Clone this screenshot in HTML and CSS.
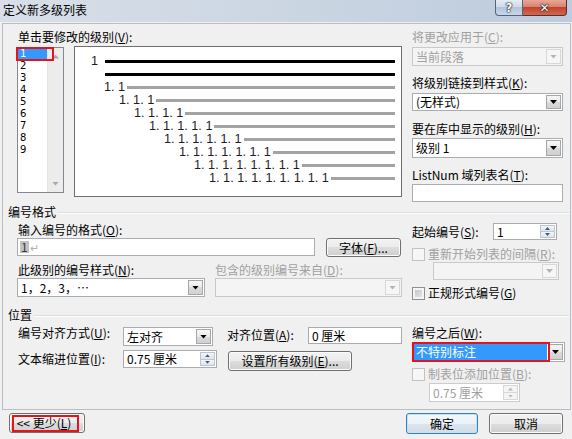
FILE: index.html
```html
<!DOCTYPE html>
<html lang="zh-CN">
<head>
<meta charset="utf-8">
<title>定义新多级列表</title>
<link rel="stylesheet" href="styles.css">
</head>
<body>
<div class="win">
  <div class="titlebar">
    <span class="title">定义新多级列表</span>
    <div class="caps"><span class="cap help">?</span><span class="cap close">✕</span></div>
  </div>
  <div class="frame">
    <div class="top">
      <div class="topleft">
        <div class="lbl ind mt6">单击要修改的级别(<u>V</u>):</div>
        <div class="levelrow">
          <div class="levels">
            <div class="items">
              <div class="item sel">1</div>
              <div class="item">2</div>
              <div class="item">3</div>
              <div class="item">4</div>
              <div class="item">5</div>
              <div class="item">6</div>
              <div class="item">7</div>
              <div class="item">8</div>
              <div class="item">9</div>
            </div>
            <div class="vscroll"><span class="sarr up"></span><span class="sarr down"></span></div>
            <span class="mark mark-level"></span>
          </div>
          <div class="preview">
            <div class="prow p0"><span class="num">1</span><span class="bar black first"></span></div>
            <div class="prow pc"><span class="bar black"></span></div>
            <div class="prow l1"><span class="num">1. 1</span><span class="bar"></span></div>
            <div class="prow l2"><span class="num">1. 1. 1</span><span class="bar"></span></div>
            <div class="prow l3"><span class="num">1. 1. 1. 1</span><span class="bar"></span></div>
            <div class="prow l4"><span class="num">1. 1. 1. 1. 1</span><span class="bar"></span></div>
            <div class="prow l5"><span class="num">1. 1. 1. 1. 1. 1</span><span class="bar"></span></div>
            <div class="prow l6"><span class="num">1. 1. 1. 1. 1. 1. 1</span><span class="bar"></span></div>
            <div class="prow l7"><span class="num">1. 1. 1. 1. 1. 1. 1. 1</span><span class="bar"></span></div>
            <div class="prow l8"><span class="num">1. 1. 1. 1. 1. 1. 1. 1. 1</span><span class="bar"></span></div>
          </div>
        </div>
      </div>
      <div class="rightcol">
        <div class="lbl dis mt6">将更改应用于(<u>C</u>):</div>
        <div class="combo dis mt3 h19"><span class="ctext">当前段落</span><span class="arr"></span></div>
        <div class="lbl mt10">将级别链接到样式(<u>K</u>):</div>
        <div class="combo mt3 h18"><span class="ctext">(无样式)</span><span class="arr"></span></div>
        <div class="lbl mt11">要在库中显示的级别(<u>H</u>):</div>
        <div class="combo mt2 h20"><span class="ctext">级别 1</span><span class="arr"></span></div>
        <div class="lbl mt10">ListNum 域列表名(<u>T</u>):</div>
        <div class="input mt2 h18"></div>
      </div>
    </div>

    <div class="group mt3"><span>编号格式</span></div>
    <div class="sec">
      <div class="secleft">
        <div class="lbl ind mt4">输入编号的格式(<u>O</u>):</div>
        <div class="row mt1">
          <div class="input fmtinput"><span class="ctext"><span class="hl">1</span><span class="ret">↵</span></span></div>
          <div class="btn fontbtn">字体(<u>F</u>)...</div>
        </div>
        <div class="row mt6">
          <div class="lbl ind w198">此级别的编号样式(<u>N</u>):</div>
          <div class="lbl dis">包含的级别编号来自(<u>D</u>):</div>
        </div>
        <div class="row mt1">
          <div class="combo numstyle"><span class="ctext">1，2，3，⋯</span><span class="arr"></span></div>
          <div class="combo dis incl"><span class="ctext"></span><span class="arr"></span></div>
        </div>
      </div>
      <div class="secright">
        <div class="row startrow mt4">
          <span class="lbl">起始编号(<u>S</u>):</span>
          <div class="input startnum"><span class="ctext">1</span><span class="spinbtns"><i class="su"></i><i class="sd"></i></span></div>
        </div>
        <div class="chkrow dis mt7"><span class="chk"></span><span class="lbl">重新开始列表的间隔(<u>R</u>):</span></div>
        <div class="combo dis restart mt1"><span class="ctext"></span><span class="arr"></span></div>
        <div class="chkrow mt6"><span class="chk"></span><span class="lbl">正规形式编号(<u>G</u>)</span></div>
      </div>
    </div>

    <div class="group mt8"><span>位置</span></div>
    <div class="sec">
      <div class="secleft">
        <div class="row mt5">
          <span class="lbl plbl up1">编号对齐方式(<u>U</u>):</span>
          <div class="combo alignc"><span class="ctext">左对齐</span><span class="arr"></span></div>
          <span class="lbl alignlbl">对齐位置(<u>A</u>):</span>
          <div class="input alignpos"><span class="ctext">0 厘米</span></div>
        </div>
        <div class="row mt4">
          <span class="lbl plbl dn2">文本缩进位置(<u>I</u>):</span>
          <div class="input indent"><span class="ctext">0.75 厘米</span><span class="spinbtns"><i class="su"></i><i class="sd"></i></span></div>
          <div class="btn allbtn">设置所有级别(<u>E</u>)...</div>
        </div>
      </div>
      <div class="secright">
        <div class="lbl mt4">编号之后(<u>W</u>):</div>
        <div class="combo after mt2"><span class="ctext selbar">不特别标注</span><span class="arr"></span><span class="mark mark-after"></span></div>
        <div class="chkrow dis mt5"><span class="chk"></span><span class="lbl">制表位添加位置(<u>B</u>):</span></div>
        <div class="input dis tabpos mt2"><span class="ctext">0.75 厘米</span><span class="spinbtns"><i class="su"></i><i class="sd"></i></span></div>
      </div>
    </div>
  </div>

  <div class="bottom">
    <div class="btn lessbtn">&lt;&lt; 更少(<u>L</u>)<span class="mark mark-less"></span></div>
    <div class="btn def okbtn">确定</div>
    <div class="btn cancelbtn">取消</div>
  </div>
</div>
</body>
</html>
```

FILE: styles.css
```css
* { box-sizing: border-box; }
html, body { margin: 0; padding: 0; }
body {
  width: 572px;
  height: 439px;
  overflow: hidden;
  background: #f0f0f0;
  font: 12px/14px "Noto Sans CJK SC", "Noto Sans CJK JP", sans-serif;
  color: #000;
}
u { text-decoration: underline; text-underline-offset: 1px; }

.win { width: 572px; height: 439px; display: flex; flex-direction: column; }

/* title bar */
.titlebar {
  height: 22px;
  flex: none;
  display: flex;
  align-items: flex-start;
  background: linear-gradient(to right, #d8dfe8 0%, #cad5e2 55%, #bccbdd 100%);
}
.title { padding-left: 3px; line-height: 20px; height: 20px; }
.caps { margin-left: auto; margin-right: 5px; display: flex; }
.cap {
  height: 16px;
  display: flex;
  align-items: center;
  justify-content: center;
  color: #fff;
  font: bold 12px/1 "DejaVu Sans", sans-serif;
  text-shadow: 0 0 2px #1d2a3e, 0 0 1px #000, 0 0 1px #000;
}
.help {
  width: 28px;
  border: 1px solid #56637a;
  border-top: none;
  border-radius: 0 0 0 4px;
  background: linear-gradient(#e6edf5, #d0dbe8 45%, #b4c4d9 50%, #c8d6e8);
}
.close {
  width: 44px;
  border: 1px solid #5a2f2a;
  border-left: none;
  border-top: none;
  border-radius: 0 0 4px 0;
  background: linear-gradient(#e7a797, #d8846f 45%, #c4432d 50%, #d2684f);
}

/* frame */
.frame {
  margin: 1px 0 0 2px;
  width: 569px;
  height: 387px;
  flex: none;
  border: 1px solid #b9bec3;
}

.lbl { height: 14px; line-height: 14px; white-space: nowrap; }
.ind { padding-left: 1px; }
.dis, .dis .lbl { color: #a0a0a0; }

.mt1 { margin-top: 1px; }
.mt2 { margin-top: 2px; }
.mt3 { margin-top: 3px; }
.mt4 { margin-top: 4px; }
.mt5 { margin-top: 5px; }
.mt6 { margin-top: 6px; }
.mt7 { margin-top: 7px; }
.mt8 { margin-top: 8px; }
.mt10 { margin-top: 10px; }
.mt11 { margin-top: 11px; }
.h18 { height: 18px; }
.h19 { height: 19px; }
.h20 { height: 20px; }

.top { display: flex; padding-left: 14px; }
.topleft { width: 385px; }
.rightcol { width: 151px; margin-left: 10px; display: flex; flex-direction: column; }

.levelrow { display: flex; align-items: flex-start; gap: 10px; margin-top: 2px; }

/* level list */
.levels {
  position: relative;
  width: 47px;
  height: 146px;
  margin-top: 1px;
  display: flex;
  background: #fff;
  border: 1px solid #828790;
}
.items { flex: 1; }
.item {
  height: 12px;
  line-height: 12px;
  padding-left: 2px;
  font: 10px/12px "DejaVu Sans", sans-serif;
}
.item.sel { background: #3399ff; color: #fff; }
.vscroll {
  width: 16px;
  background: #ececec;
  border-left: 1px solid #e4e4e4;
  display: flex;
  flex-direction: column;
  justify-content: space-between;
}
.sarr { height: 17px; display: flex; align-items: center; justify-content: center; }
.sarr::after { content: ""; width: 7px; height: 4px; background: #a8a8a8; }
.sarr.up::after { clip-path: polygon(50% 0, 100% 100%, 0 100%); }
.sarr.down::after { clip-path: polygon(0 0, 100% 0, 50% 100%); }

.mark { position: absolute; border: 2px solid #e3141c; pointer-events: none; }
.mark-level { left: -2px; top: -1px; width: 38px; height: 14px; }

/* preview */
.preview {
  width: 328px;
  height: 151px;
  background: #fff;
  border: 1px solid #6f6f6f;
  padding: 8px 6px 0 0;
}
.prow { height: 13px; display: flex; align-items: center; }
.num {
  font: 12.7px/13px "Liberation Sans", Arial, sans-serif;
  white-space: pre;
  color: #1e1e1e;
}
.bar { flex: 1; height: 3px; background: #a3a3a3; margin-left: 2px; }
.bar.black { background: #000; }
.bar.first { margin-left: 7px; }
.p0 { padding-left: 16px; }
.pc { padding-left: 28px; }
.l1 { padding-left: 29px; }
.l2 { padding-left: 44px; }
.l3 { padding-left: 59px; }
.l4 { padding-left: 74px; }
.l5 { padding-left: 89px; }
.l6 { padding-left: 104px; }
.l7 { padding-left: 119px; }
.l8 { padding-left: 134px; }

/* controls */
.combo, .input {
  position: relative;
  display: flex;
  align-items: stretch;
  background: #fff;
  border: 1px solid #a9adb3;
}
.ctext {
  flex: 1;
  min-width: 0;
  padding-left: 3px;
  display: flex;
  align-items: center;
  white-space: nowrap;
  overflow: hidden;
}
.arr {
  width: 15px;
  margin: 1px;
  border: 1px solid #a7a6aa;
  background: linear-gradient(#f7f7f7, #e9e9e9 50%, #dadada 50%, #d0d0d0);
  display: flex;
  align-items: center;
  justify-content: center;
}
.arr::after {
  content: "";
  width: 7px;
  height: 4px;
  background: #000;
  clip-path: polygon(0 0, 100% 0, 50% 100%);
}
.combo.dis { background: #f4f4f4; border-color: #c9c9c9; }
.combo.dis .arr { border-color: #d8d8d8; background: #f6f6f6; }
.combo.dis .arr::after { background: #b4b4b4; }

.spinbtns { width: 15px; margin: 1px; display: flex; flex-direction: column; }
.spinbtns i {
  flex: 1;
  display: flex;
  align-items: center;
  justify-content: center;
  background: linear-gradient(#f4f6f9, #dfe5ec);
  border: 1px solid #bcc5d0;
}
.spinbtns i + i { border-top: none; }
.spinbtns i::after { content: ""; width: 5px; height: 3px; background: #42597d; }
.spinbtns .su::after { clip-path: polygon(50% 0, 100% 100%, 0 100%); }
.spinbtns .sd::after { clip-path: polygon(0 0, 100% 0, 50% 100%); }
.input.dis { border-color: #c9ccd0; color: #a0a0a0; }
.input.dis .spinbtns i { background: #f4f4f4; border-color: #d8d8d8; }
.input.dis .spinbtns i::after { background: #b8b8b8; }

.btn {
  position: relative;
  display: flex;
  align-items: center;
  justify-content: center;
  white-space: nowrap;
  border: 1px solid #707070;
  border-radius: 3px;
  background: linear-gradient(#f2f2f2, #ebebeb 50%, #dddddd 50%, #cfcfcf);
  box-shadow: inset 0 0 0 1px #fbfbfb;
}
.btn.def {
  border-color: #3c7fb1;
  box-shadow: inset 0 0 0 1px #bfe4f8;
  background: linear-gradient(#f4f8fb, #eaf1f7 50%, #dbe5ee 50%, #d2dde8);
}

.chkrow { display: flex; align-items: center; gap: 3px; height: 14px; }
.chk {
  width: 13px;
  height: 13px;
  flex: none;
  border: 1px solid #8e8f8f;
  background: linear-gradient(135deg, #b9bdc3, #eeeeef);
  box-shadow: inset 0 0 0 2px #f4f4f4;
}
.chkrow.dis .chk { border-color: #c2c2c2; background: #f7f7f7; box-shadow: none; }

/* groups */
.group {
  display: flex;
  align-items: center;
  height: 14px;
  padding-left: 5px;
  margin-right: 1px;
}
.group::after {
  content: "";
  flex: 1;
  height: 0;
  margin-left: 2px;
  border-top: 1px solid #d5dfe5;
  box-shadow: 0 1px 0 #fff;
}

.sec { display: flex; padding-left: 14px; }
.secleft { width: 385px; }
.secright { width: 151px; margin-left: 10px; display: flex; flex-direction: column; }
.row { display: flex; align-items: flex-start; }

.fmtinput { width: 298px; height: 18px; }
.fmtinput .ctext { padding-left: 2px; }
.hl { background: #c2c2c2; color: #3a3a3a; padding: 0 1px; line-height: 12px; }
.ret { color: #b0b0b0; font-size: 11px; margin-left: 1px; }
.fontbtn { width: 75px; height: 19px; margin-left: 11px; }
.w198 { width: 198px; }
.numstyle { width: 188px; height: 19px; }
.incl { width: 187px; height: 19px; margin-left: 10px; }

.startrow { align-items: center; padding-right: 6px; }
.startnum { width: 64px; height: 17px; margin-left: auto; }
.restart { width: 126px; height: 18px; margin-left: 21px; }

.plbl { width: 106px; padding-left: 1px; }
.up1 { margin-top: -1px; }
.dn2 { margin-top: 2px; }
.alignc { width: 90px; height: 19px; }
.alignlbl { width: 81px; margin-left: 14px; margin-top: 1px; }
.alignpos { width: 94px; height: 17px; }
.indent { width: 94px; height: 18px; }
.allbtn { width: 124px; height: 20px; margin-left: 11px; margin-top: 1px; }

.after { height: 20px; width: 153px; }
.selbar { background: #3399ff; color: #fff; margin: 1px 0 1px 1px; padding-left: 2px; }
.mark-after { left: -1px; top: -1px; width: 138px; height: 20px; }
.tabpos { width: 91px; height: 19px; margin-left: 17px; }

/* bottom */
.bottom { display: flex; padding: 0 9px; margin-top: 3px; }
.lessbtn { width: 76px; height: 20px; padding-right: 6px; }
.mark-less { left: 2px; top: 1px; width: 67px; height: 17px; }
.okbtn { width: 72px; height: 21px; margin-left: auto; }
.cancelbtn { width: 74px; height: 21px; margin-left: 11px; }
```
